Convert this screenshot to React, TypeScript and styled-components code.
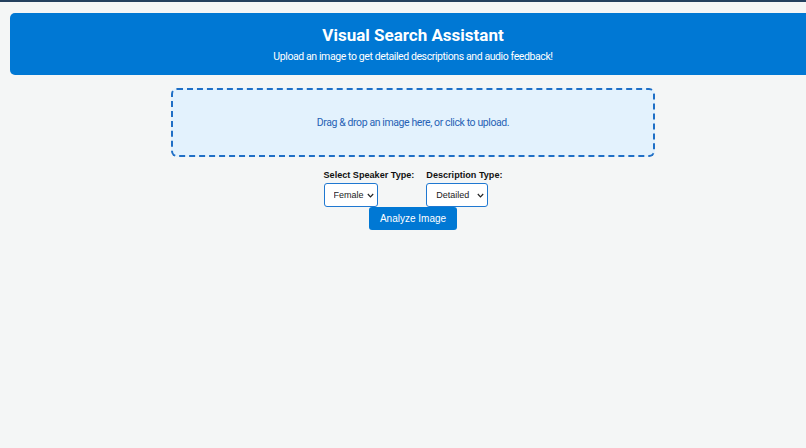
import React from "react";
import styled, { createGlobalStyle } from "styled-components";

const Global = createGlobalStyle`
  html, body {
    margin: 0;
    padding: 0;
    background: #f4f6f6;
    overflow: hidden;
  }
  body {
    border-top: 2px solid #23405e;
    font-family: Roboto, "Liberation Sans", sans-serif;
  }
`;

const Page = styled.div`
  width: 806px;
  margin-left: 10px;
  padding-top: 11px;
  display: flex;
  flex-direction: column;
  align-items: center;
`;

const Header = styled.header`
  width: 100%;
  box-sizing: border-box;
  background: #0078d4;
  border-radius: 5px;
  color: #fff;
  display: flex;
  flex-direction: column;
  align-items: center;
  gap: 5px;
  padding: 12px 0 11px;
`;

const Title = styled.h1`
  margin: 0;
  font-family: Roboto, sans-serif;
  font-weight: 700;
  font-size: 17px;
  line-height: 20px;
`;

const Subtitle = styled.p`
  margin: 0;
  font-family: Roboto, sans-serif;
  font-size: 10.5px;
  letter-spacing: -0.4px;
  line-height: 14px;
`;

const DropZone = styled.div`
  margin-top: 13px;
  width: 60%;
  height: 69px;
  box-sizing: border-box;
  border: 2px dashed #1f6fc6;
  border-radius: 6px;
  background: #e3f2fd;
  display: flex;
  align-items: center;
  justify-content: center;
  color: #2762b5;
  font-family: Roboto, sans-serif;
  font-size: 10.5px;
  letter-spacing: -0.4px;
  cursor: pointer;
`;

const Controls = styled.div`
  margin-top: 12px;
  display: flex;
  gap: 12px;
  align-items: flex-start;
`;

const Field = styled.div`
  display: flex;
  flex-direction: column;
  align-items: flex-start;
  gap: 2px;
`;

const Label = styled.label`
  font-family: "Liberation Sans", Arial, sans-serif;
  font-weight: 700;
  font-size: 9.1px;
  line-height: 12px;
  color: #111;
`;

const SelectWrap = styled.div`
  position: relative;
  display: inline-flex;
`;

const Select = styled.select<{ $w: number }>`
  appearance: none;
  -webkit-appearance: none;
  width: ${(p) => p.$w}px;
  height: 24px;
  box-sizing: border-box;
  border: 1px solid #1f78d1;
  border-radius: 3px;
  background: #fff;
  font-family: "Liberation Sans", Arial, sans-serif;
  font-size: 9px;
  color: #222;
  padding: 0 4px 0 9px;
  outline: none;
`;

const Chevron = styled.svg`
  position: absolute;
  right: 4px;
  top: 10px;
  width: 7px;
  height: 5px;
  pointer-events: none;
`;

const Button = styled.button`
  height: 23px;
  padding: 0 11px;
  border: none;
  border-radius: 3px;
  background: #0078d4;
  color: #fff;
  font-family: "Liberation Sans", Arial, sans-serif;
  font-size: 10px;
  cursor: pointer;
`;

function Dropdown({ w, value, options }: { w: number; value: string; options: string[] }) {
  return (
    <SelectWrap>
      <Select $w={w} defaultValue={value}>
        {options.map((o) => (
          <option key={o} value={o}>
            {o}
          </option>
        ))}
      </Select>
      <Chevron viewBox="0 0 7 5">
        <path d="M0.8 1 L3.5 3.8 L6.2 1" fill="none" stroke="#222" strokeWidth="1.2" />
      </Chevron>
    </SelectWrap>
  );
}

export default function App() {
  return (
    <>
      <Global />
      <Page>
        <Header>
          <Title>Visual Search Assistant</Title>
          <Subtitle>Upload an image to get detailed descriptions and audio feedback!</Subtitle>
        </Header>
        <DropZone>Drag &amp; drop an image here, or click to upload.</DropZone>
        <Controls>
          <Field>
            <Label>Select Speaker Type:</Label>
            <Dropdown w={54} value="Female" options={["Female", "Male"]} />
          </Field>
          <Field>
            <Label>Description Type:</Label>
            <Dropdown w={62} value="Detailed" options={["Detailed", "Brief"]} />
          </Field>
        </Controls>
        <Button>Analyze Image</Button>
      </Page>
    </>
  );
}
